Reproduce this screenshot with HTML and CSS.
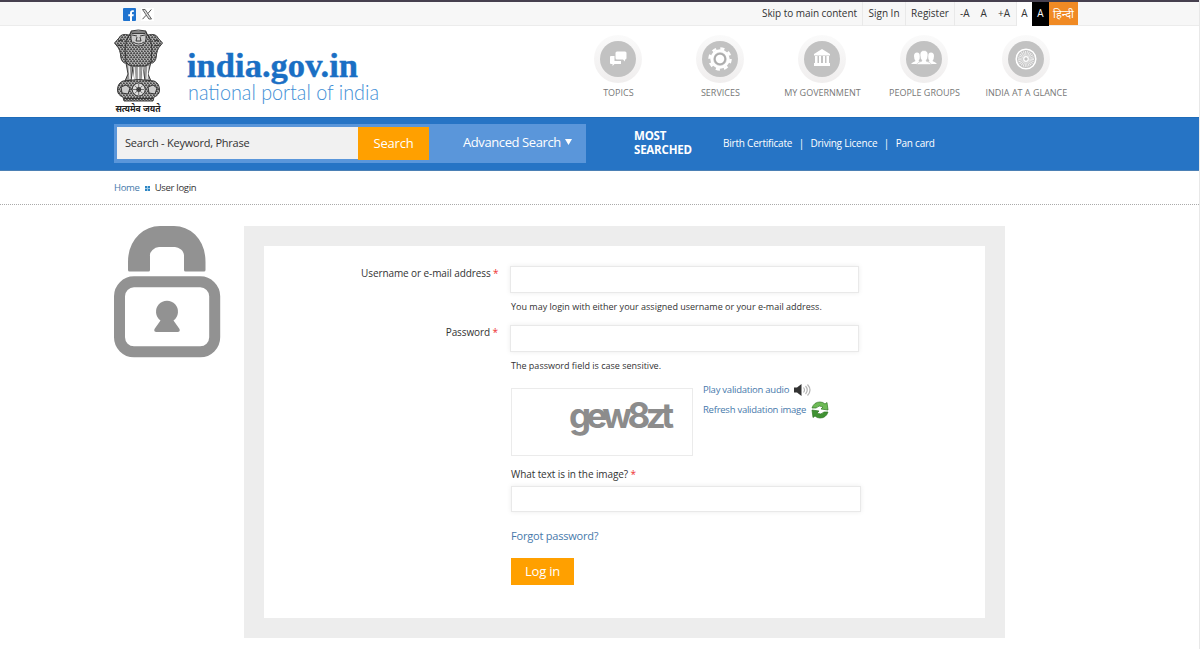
FILE: index.html
```html
<!DOCTYPE html>
<html lang="en">
<head>
    <meta charset="UTF-8">
    <meta name="viewport" content="width=device-width, initial-scale=1.0">
    <title>User login | National Portal of India</title>
    <link rel="stylesheet" href="styles.css">
</head>
<body>
    <div class="top-bar">
        <div class="container">
            <div class="social">
                <svg width="13" height="13" viewBox="0 0 13 13"><rect width="13" height="13" rx="1" fill="#1f73cf"/><path d="M7 13V8.200H5.300V6.300H7V4.900C7 3.100 8 2.300 9.500 2.300h1.300v1.800h-.9c-.7 0-.9.3-.9.9v1.300h1.800l-.3 1.900H9V13z" fill="#fff"/></svg>
                <svg class="x-icon" width="13" height="13" viewBox="0 0 13 13"><rect width="13" height="13" fill="#fff"/><path d="M1.500 1.500h2.600l6.400 9.500H7.900z" fill="#ddd" stroke="#555" stroke-width=".9"/><path d="M10.300 1.500L6.800 5.600M5.200 7.200L1.500 11.200" stroke="#555" stroke-width="1"/></svg>
            </div>
            <ul class="top-links">
                <li class="skip"><a href="#main">Skip to main content</a></li>
                <li class="sign"><a href="#">Sign In</a></li>
                <li class="register"><a href="#">Register</a></li>
                <li class="sizes"><a href="#">-A</a><a href="#">A</a><a href="#">+A</a></li>
                <li class="light"><a href="#">A</a></li>
                <li class="dark"><a href="#">A</a></li>
                <li class="hindi"><a href="#">हिन्दी</a></li>
            </ul>
        </div>
    </div>

    <header>
        <div class="container">
            <!-- State emblem and site name -->
            <svg class="logo" width="270" height="91" viewBox="0 0 270 91">
                <defs>
                    <pattern id="fur" width="3" height="4" patternUnits="userSpaceOnUse">
                        <rect width="3" height="4" fill="#666"/>
                        <path d="M0 1q.8 1.500 1.500 0T3 1M0 3.200q.8-1.200 1.500 0t1.500 0" fill="none" stroke="#ddd" stroke-width=".7"/>
                        <path d="M1 0v1M2 2v1" stroke="#111" stroke-width=".7"/>
                    </pattern>
                </defs>
                <g stroke="#2b2b2b" stroke-width=".9" transform="translate(0 1)">
                    <path d="M15 8Q7 6 5 11L.5 16l4 5q1 2 2 6 0 7 4 9h5z" fill="url(#fur)"/>
                    <path d="M34 8q8-2 10 3l4.500 5-4 5q-1 2-2 6 0 7-4 9h-5z" fill="url(#fur)"/>
                    <path d="M17 5Q24 2 32 5q6 8 6 17l-1 13q-5 6-12.500 6T12 35l-1-13q0-9 6-17z" fill="url(#fur)"/>
                    <path d="M17 4q7-2 15 0v8q-1 7-7.500 7T17 12z" fill="#ccc"/>
                    <path d="M18 8l5 1M31 8l-5 1M23 10l-1 4h5l-1-4M19 15q6 4 11 0M17 5h15M18 6.500h13" fill="none"/>
                    <path d="M4 14l5-1M3 18l6 1M45 14l-5-1M46 18l-6 1" fill="none"/>
                    <path d="M12 36l2 11-3 7h6l2-14 2 15h6l2-15 2 14h6l-3-7 3-12-5 4H17z" fill="#999"/>
                    <path d="M15 39l1 13M20 40l1 13M24.500 40v13M29 40l-1 13M34 39l-1 13" fill="none" stroke="#f4f4f4" stroke-width="1.300"/>
                    <path d="M9 54q16-3 31 0 5 2 5.500 8T40 70l-1 4H10l-1-4q-6-2-5.500-8T9 54z" fill="url(#fur)"/>
                    <circle cx="24.700" cy="62.500" r="6.500" fill="#ddd"/>
                    <circle cx="24.700" cy="62.500" r="2" fill="#777"/>
                    <path d="M19 62.500h11M24.700 57v11M20.700 58.500l8 8M28.700 58.500l-8 8" fill="none" stroke-width=".6"/>
                    <path d="M7 60l5-2 4 3-2 6-6-1zM34 60l5-2 4 3-2 6-6-1z" fill="#ccc"/>
                    <path d="M10 71.500h29" fill="none"/>
                </g>
                <text class="motto" x="1.500" y="85.500" textLength="45" lengthAdjust="spacingAndGlyphs">सत्यमेव जयते</text>
                <text class="site-name" x="73" y="50.500" textLength="171" lengthAdjust="spacingAndGlyphs">india.gov.in</text>
                <text class="tagline" x="74" y="74" textLength="191" lengthAdjust="spacingAndGlyphs">national portal of india</text>
            </svg>
            <nav>
                <a href="#">
                    <span class="ring"><svg width="36" height="36" viewBox="0 0 36 36"><g fill="#fff"><path d="M11 15h3.500v5H21v3h-6.500l-2 2v-2H11q-1 0-1-1v-6q0-1 1-1z"/><path d="M17 10.500h8q1.500 0 1.500 1.500v5q0 1.500-1.500 1.500v2l-2-2h-6q-1.500 0-1.500-1.500v-5q0-1.500 1.500-1.500z"/></g></svg></span>
                    <span>TOPICS</span>
                </a>
                <a href="#">
                    <span class="ring"><svg width="36" height="36" viewBox="0 0 36 36"><circle cx="18" cy="18" r="10.500" fill="none" stroke="#fff" stroke-width="2.500" stroke-dasharray="4.100 4.147"/><circle cx="18" cy="18" r="8.200" fill="none" stroke="#fff" stroke-width="3"/><circle cx="18" cy="18" r="5.300" fill="none" stroke="#aaa" stroke-width="1.500"/><circle cx="18" cy="18" r="4.200" fill="#fff"/></svg></span>
                    <span>SERVICES</span>
                </a>
                <a href="#">
                    <span class="ring"><svg width="36" height="36" viewBox="0 0 36 36"><path d="M10 13l8-5 8 5v1.500H10zM11 15h2.500v7H11zM15 15h2v7h-2zM19 15h2v7h-2zM22.500 15H25v7h-2.500zM10 22h16v3H10z" fill="#fff"/></svg></span>
                    <span>MY GOVERNMENT</span>
                </a>
                <a href="#">
                    <span class="ring"><svg width="36" height="36" viewBox="0 0 36 36"><g fill="#fff"><path d="M5 23q1-1.500 4.500-3Q8 18 8 15q0-3.500 3-3.500t3 3.500q0 3-1.500 5 2 1 3 3zM31 23q-1-1.500-4.500-3 1.500-2 1.500-5 0-3.500-3-3.500T22 15q0 3 1.500 5-2 1-3 3z"/><path d="M10.500 23.500q.5-2 5.500-3.500-2-2.200-2-6 0-4.500 4-4.500t4 4.500q0 3.800-2 6 5 1.500 5.500 3.500z" stroke="#c2c2c2" stroke-width=".6"/></g></svg></span>
                    <span>PEOPLE GROUPS</span>
                </a>
                <a href="#">
                    <span class="ring"><svg width="36" height="36" viewBox="0 0 36 36" fill="none" stroke="#fff"><circle cx="18" cy="18" r="9.800" stroke-width="1.500"/><circle cx="18" cy="18" r="5.500" stroke-width="5" stroke-dasharray=".75 .69" stroke-opacity=".75"/><circle cx="18" cy="18" r="2.300" stroke-width="1.200"/></svg></span>
                    <span>INDIA AT A GLANCE</span>
                </a>
            </nav>
        </div>
    </header>

    <div class="search-bar">
        <div class="container">
            <form class="search-form">
                <input type="text" placeholder="Search - Keyword, Phrase">
                <button type="button">Search</button>
                <a href="#">Advanced Search <svg width="7" height="6" viewBox="0 0 7 6"><path d="M0 0h7L3.500 6z" fill="#fff"/></svg></a>
            </form>
            <strong>MOST SEARCHED</strong>
            <ul class="popular">
                <li><a href="#">Birth Certificate</a></li>
                <li><a href="#">Driving Licence</a></li>
                <li><a href="#">Pan card</a></li>
            </ul>
        </div>
    </div>

    <div class="breadcrumb">
        <div class="container">
            <a href="#">Home</a>
            <svg width="5" height="5" viewBox="0 0 5 5"><rect width="5" height="5" fill="#9cc8e6"/><path d="M0 0h2v2H0zM3 0h2v2H3zM0 3h2v2H0zM3 3h2v2H3z" fill="#2d86c4"/></svg>
            <span>User login</span>
        </div>
    </div>

    <main id="main" class="container">
        <svg class="lock" width="107" height="132" viewBox="0 0 107 132">
            <path d="M14 44V36Q14 19 25 8.500 34 0 46 0H60Q72 0 81 8.500 91.500 19 91.500 36v8q0 1.500-1.500 1.500H71.500q-1.500 0-1.500-1.500V30q0-4-3-6.500T61 21H45q-3.500 0-6.500 3T36 30v14q0 1.500-1.500 1.500h-19Q14 45.500 14 44z" fill="#929292"/>
            <rect x="5.500" y="55.800" width="95.200" height="70" rx="14.500" fill="none" stroke="#929292" stroke-width="11"/>
            <path d="M46.500 94.500a11 11 0 1 1 13 0l6 8.500q1 3-2 3h-21q-3 0-2-3z" fill="#929292"/>
        </svg>
        <form class="login">
            <div class="row">
                <label for="user">Username or e-mail address <em>*</em></label>
                <div class="field">
                    <input type="text" id="user">
                    <p>You may login with either your assigned username or your e-mail address.</p>
                </div>
            </div>
            <div class="row">
                <label for="pass">Password <em>*</em></label>
                <div class="field">
                    <input type="password" id="pass">
                    <p>The password field is case sensitive.</p>
                </div>
            </div>
            <div class="captcha">
                <div class="captcha-box">
                    <svg width="180" height="66" viewBox="0 0 180 66"><text x="57" y="38.500" textLength="105" lengthAdjust="spacing">gew8zt</text></svg>
                </div>
                <div class="captcha-links">
                    <a href="#">Play validation audio
                        <svg width="18" height="14" viewBox="0 0 18 14"><path d="M0 4.500h3L7.500 1v12L3 9.500H0z" fill="#333"/><path d="M9.500 4.500q2 2.500 0 5M11.500 3q3.500 4 0 8M13.500 1.500q5 5.500 0 11" fill="none" stroke="#b5b5b5" stroke-width="1.200"/></svg>
                    </a>
                    <a href="#">Refresh validation image
                        <svg width="18" height="18" viewBox="0 0 18 18"><g stroke="#2f7624" stroke-width=".7"><path d="M1 7Q3 1 9 1q3 0 5 2l2-1.500 1 7.500-7-1 2-2Q8 3.500 5 7z" fill="#6dba55"/><path d="M17 11q-2 6-8 6-3 0-5-2l-2 1.500L1 9l7 1-2 2q4 2.500 7-1z" fill="#3f9232"/></g></svg>
                    </a>
                </div>
            </div>
            <div class="answer">
                <label for="answer">What text is in the image? <em>*</em></label>
                <input type="text" id="answer">
            </div>
            <a class="forgot" href="#">Forgot password?</a>
            <button type="button">Log in</button>
        </form>
    </main>
</body>
</html>
```

FILE: styles.css
```css
* {
    box-sizing: border-box;
}

body {
    margin: 0;
    height: 649px;
    overflow: hidden;
    background: #fff;
    border-right: 1px solid #e8e8e8;
    color: #333;
    font-family: 'Open Sans', 'Noto Sans', sans-serif;
    font-size: 10px;
}

a {
    color: inherit;
    text-decoration: none;
}

ul {
    list-style: none;
    margin: 0;
    padding: 0;
}

input,
button {
    font-family: inherit;
    border: none;
    outline: none;
}

.container {
    width: 964px;
    margin-left: 114px;
    display: flex;
}

/* Top bar */
.top-bar {
    height: 26px;
    margin-right: -1px;
    background: #f7f7f7;
    border-top: 2px solid #46404f;
    border-bottom: 1px solid #ececec;
}

.top-bar .container {
    justify-content: space-between;
}

.social {
    display: flex;
    padding: 6px 0 0 9px;
    gap: 5px;
}

.top-links {
    display: flex;
    line-height: 23px;
    text-align: center;
}

.top-links li {
    height: 24px;
    border-right: 1px solid #e9e9e9;
}

.skip {
    width: 106px;
    letter-spacing: -0.05px;
}

.sign {
    width: 43px;
}

.register {
    width: 49px;
}

.top-links .sizes {
    width: 62px;
    display: flex;
    justify-content: space-between;
    padding: 0 6px 0 5px;
}

.top-links .light {
    width: 15px;
    background: #fff;
    border: none;
}

.top-links .dark {
    width: 17px;
    background: #000;
    color: #fff;
    border: none;
}

.top-links .hindi {
    width: 29px;
    height: 23px;
    background: #f08a24;
    color: #fff;
    font-size: 11px;
    border: none;
}

/* Header */
header {
    height: 91px;
}

header .container {
    justify-content: space-between;
}

.logo {
    overflow: visible;
}

.logo text {
    font-family: 'Noto Sans', sans-serif;
}

.logo .motto {
    font-size: 9px;
    font-weight: bold;
    fill: #222;
}

.logo .site-name {
    font-family: 'Liberation Serif', serif;
    font-size: 34px;
    font-weight: bold;
    fill: #1a6fc4;
    stroke: #1a6fc4;
    stroke-width: 0.4px;
}

.logo .tagline {
    font-family: Lato, sans-serif;
    font-size: 21px;
    font-weight: 300;
    fill: #3f8fd6;
}

nav {
    display: flex;
    padding-top: 9px;
    margin-right: 0.6px;
}

nav a {
    width: 102px;
    display: flex;
    flex-direction: column;
    align-items: center;
    color: #777;
    font-size: 9px;
    line-height: 13px;
    white-space: nowrap;
}

.ring {
    width: 48px;
    height: 48px;
    margin-bottom: 3px;
    padding: 6px;
    border-radius: 50%;
    background: linear-gradient(#fafafa, #f0eeee);
}

.ring svg {
    display: block;
    background: #c2c2c2;
    border-radius: 50%;
}

/* Search */
.search-bar {
    height: 54px;
    background: #2674c5;
    color: #fff;
    border-top: 1px solid #1e6cb9;
    border-bottom: 1px solid #4b80b5;
}

.search-form {
    display: flex;
    width: 472px;
    height: 39px;
    margin-top: 6px;
    padding: 3px;
    background: #5a96da;
}

.search-form input {
    width: 241px;
    height: 32px;
    padding: 0 8px 2px;
    background: #f1f1f1;
    font-size: 11px;
    letter-spacing: -0.23px;
}

.search-form input::placeholder {
    color: #333;
    opacity: 1;
}

.search-form button,
.login button {
    background: #ffa000;
    color: #fff;
    font-size: 13px;
    letter-spacing: -0.2px;
}

.search-form button {
    width: 71px;
    height: 33px;
    padding: 0 0 2px;
}

.search-form a {
    margin-left: 34px;
    font-size: 13px;
    line-height: 31px;
    letter-spacing: -0.4px;
    white-space: nowrap;
}

.search-form a svg {
    margin: 0 0 2px 1px;
}

.search-bar strong {
    width: 89px;
    margin: 11px 0 0 48px;
    padding-right: 20px;
    font-size: 11.500px;
    line-height: 14px;
    letter-spacing: 0.1px;
    font-weight: 700;
    letter-spacing: -0.2px;
}

.popular {
    display: flex;
    font-size: 10px;
    line-height: 50px;
    letter-spacing: -0.22px;
}

.popular li + li::before {
    content: "|";
    margin: 0 6.500px;
}

/* Breadcrumb */
.breadcrumb {
    height: 34px;
    border-bottom: 1px dotted #aaa;
    line-height: 33px;
    font-size: 9.500px;
    letter-spacing: -0.3px;
}

.breadcrumb .container {
    align-items: center;
    gap: 5px;
}

.breadcrumb svg {
    margin-top: 2px;
}

.breadcrumb a,
.captcha-links,
.forgot {
    color: #4779ab;
}

/* Login form */
main.container {
    margin-top: 21px;
    align-items: flex-start;
    gap: 23px;
}

.lock {
    flex: none;
}

.login {
    width: 761px;
    height: 412px;
    padding: 20px 0 0 97px;
    border: 20px solid #ededed;
}

.row {
    display: flex;
    height: 59px;
}

.row label {
    width: 137px;
    margin-right: 12px;
    text-align: right;
    line-height: 14px;
    letter-spacing: -0.09px;
    white-space: nowrap;
}

em {
    color: #e33;
    font-style: normal;
}

.field p {
    margin: 7px 0 0 1px;
    font-size: 9px;
    line-height: 13px;
}

.login input {
    display: block;
    width: 349px;
    height: 27px;
    background: #fff;
    border: 1px solid #e9e9e9;
    box-shadow: 0 0 5px rgba(0, 0, 0, 0.08);
}

.captcha {
    display: flex;
    margin: 4px 0 0 150px;
}

.captcha-box {
    width: 182px;
    height: 68px;
    border: 1px solid #ebebeb;
}

.captcha-box text {
    font-family: Inter, 'Liberation Sans', sans-serif;
    font-size: 35px;
    font-weight: 700;
    fill: #8c8c8c;
}

.captcha-links {
    margin: -8px 0 0 10px;
    font-size: 9.500px;
    letter-spacing: -0.25px;
}

.captcha-links a {
    display: flex;
    align-items: center;
    gap: 5px;
    height: 19px;
}

.captcha-links a + a {
    margin-top: 1px;
}

.answer {
    margin: 11px 0 0 150px;
}

.answer label {
    display: block;
    margin-bottom: 5px;
    line-height: 14px;
    letter-spacing: -0.09px;
}

.answer input {
    width: 350px;
    height: 26px;
}

.forgot {
    display: block;
    margin: 16px 0 0 150px;
    font-size: 11px;
    line-height: 15px;
    letter-spacing: -0.2px;
}

.login button {
    width: 63px;
    height: 27px;
    margin: 15px 0 0 150px;
    padding: 0 0 2px;
}
```
